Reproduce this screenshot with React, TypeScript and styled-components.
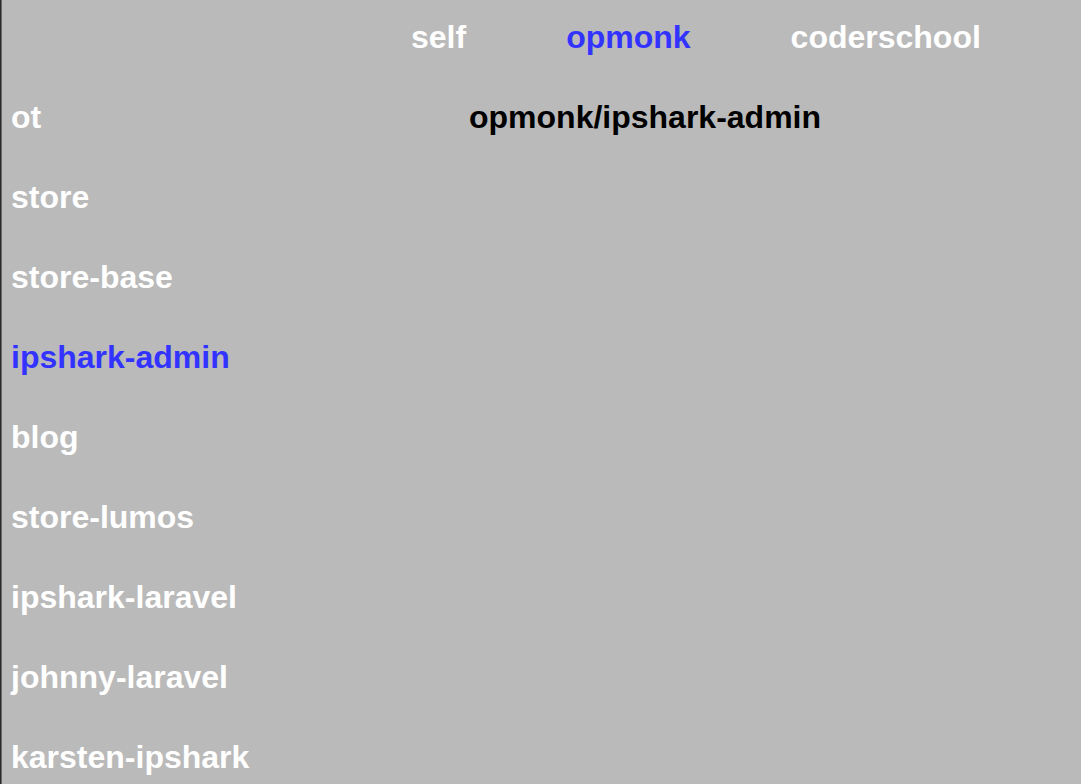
import React from "react";
import styled, { createGlobalStyle } from "styled-components";

const Global = createGlobalStyle`
  html, body {
    margin: 0;
    padding: 0;
    background: #bababa;
  }
  body {
    font-family: "Liberation Sans", Arial, Helvetica, sans-serif;
    font-weight: bold;
  }
`;

const Page = styled.div`
  width: 1081px;
  height: 784px;
  box-sizing: border-box;
  border-left: 1px solid #2a2a2a;
  box-shadow: inset 1px 0 0 #6a6a6a;
  background: #bababa;
  overflow: hidden;
  display: flex;
  flex-direction: column;
`;

const TopBar = styled.nav`
  display: flex;
  flex-shrink: 0;
  height: 80px;
  align-items: flex-start;
  padding-left: 410px;
  gap: 100px;
`;

const Tab = styled.span<{ $active?: boolean }>`
  font-size: 32px;
  line-height: 74px;
  color: ${(p) => (p.$active ? "#3333ff" : "#ffffff")};
`;

const Body = styled.div`
  display: flex;
  flex-shrink: 0;
`;

const Sidebar = styled.ul`
  list-style: none;
  margin: 0;
  padding: 0 0 0 10px;
  width: 300px;
  flex-shrink: 0;
`;

const Item = styled.li<{ $active?: boolean }>`
  font-size: 32px;
  height: 80px;
  line-height: 74px;
  white-space: nowrap;
  color: ${(p) => (p.$active ? "#3333ff" : "#ffffff")};
`;

const Main = styled.main`
  padding-left: 158px;
`;

const Title = styled.h1`
  margin: 0;
  font-size: 32px;
  line-height: 74px;
  color: #000000;
`;

const tabs = ["self", "opmonk", "coderschool"];
const repos = [
  "ot",
  "store",
  "store-base",
  "ipshark-admin",
  "blog",
  "store-lumos",
  "ipshark-laravel",
  "johnny-laravel",
  "karsten-ipshark",
];

export default function App() {
  return (
    <>
      <Global />
      <Page>
        <TopBar>
          {tabs.map((t) => (
            <Tab key={t} $active={t === "opmonk"}>
              {t}
            </Tab>
          ))}
        </TopBar>
        <Body>
          <Sidebar>
            {repos.map((r) => (
              <Item key={r} $active={r === "ipshark-admin"}>
                {r}
              </Item>
            ))}
          </Sidebar>
          <Main>
            <Title>opmonk/ipshark-admin</Title>
          </Main>
        </Body>
      </Page>
    </>
  );
}
